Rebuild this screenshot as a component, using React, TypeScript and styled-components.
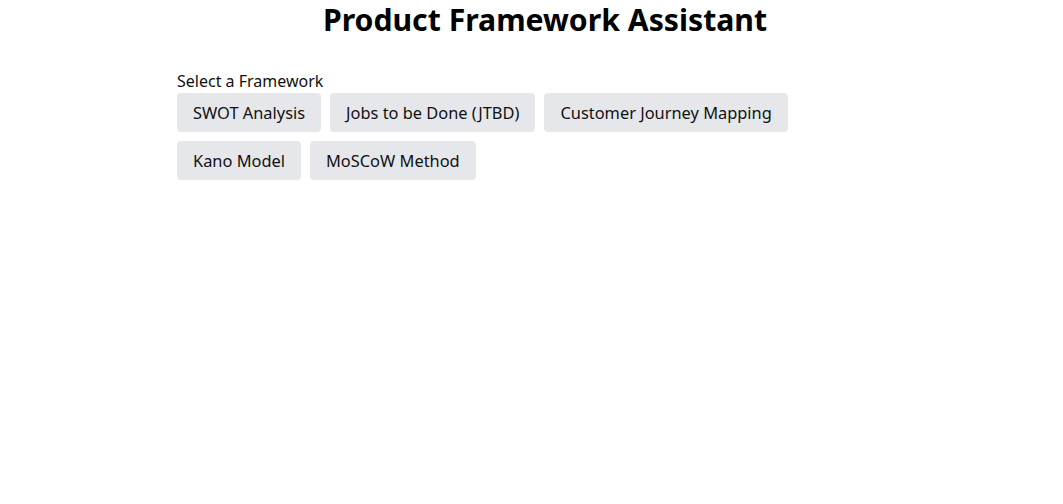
import React, { useState } from 'react';
import styled, { createGlobalStyle } from 'styled-components';

const GlobalStyle = createGlobalStyle`
  body {
    margin: 0;
    background: #ffffff;
    font-family: "Noto Sans", "Open Sans", sans-serif;
    color: #111111;
  }
`;

const Page = styled.div`
  padding: 0 16px;
`;

const Title = styled.h1`
  margin: 0;
  padding-top: 2px;
  padding-left: 27px;
  text-align: center;
  font-size: 30.2px;
  line-height: 36px;
  font-weight: 700;
  color: #000000;
`;

const Section = styled.div`
  margin: 32px 0 0 161px;
  max-width: 700px;
`;

const Label = styled.div`
  font-size: 16px;
  line-height: 22px;
  margin-bottom: 1px;
`;

const ButtonGrid = styled.div`
  display: flex;
  flex-wrap: wrap;
  gap: 9px 9px;
`;

const FrameworkButton = styled.button<{ $active: boolean }>`
  height: 39px;
  padding: 0 16px;
  border: none;
  border-radius: 4px;
  background: ${({ $active }) => ($active ? '#d1d5db' : '#e5e7eb')};
  color: #111111;
  font-family: inherit;
  font-size: 16.4px;
  cursor: pointer;
`;

const frameworks = [
  'SWOT Analysis',
  'Jobs to be Done (JTBD)',
  'Customer Journey Mapping',
  'Kano Model',
  'MoSCoW Method',
];

export default function App() {
  const [selected, setSelected] = useState<string | null>(null);

  return (
    <>
      <GlobalStyle />
      <Page>
        <Title>Product Framework Assistant</Title>
        <Section>
          <Label>Select a Framework</Label>
          <ButtonGrid>
            {frameworks.map(name => (
              <FrameworkButton
                key={name}
                $active={selected === name}
                onClick={() => setSelected(name)}
              >
                {name}
              </FrameworkButton>
            ))}
          </ButtonGrid>
        </Section>
      </Page>
    </>
  );
}
